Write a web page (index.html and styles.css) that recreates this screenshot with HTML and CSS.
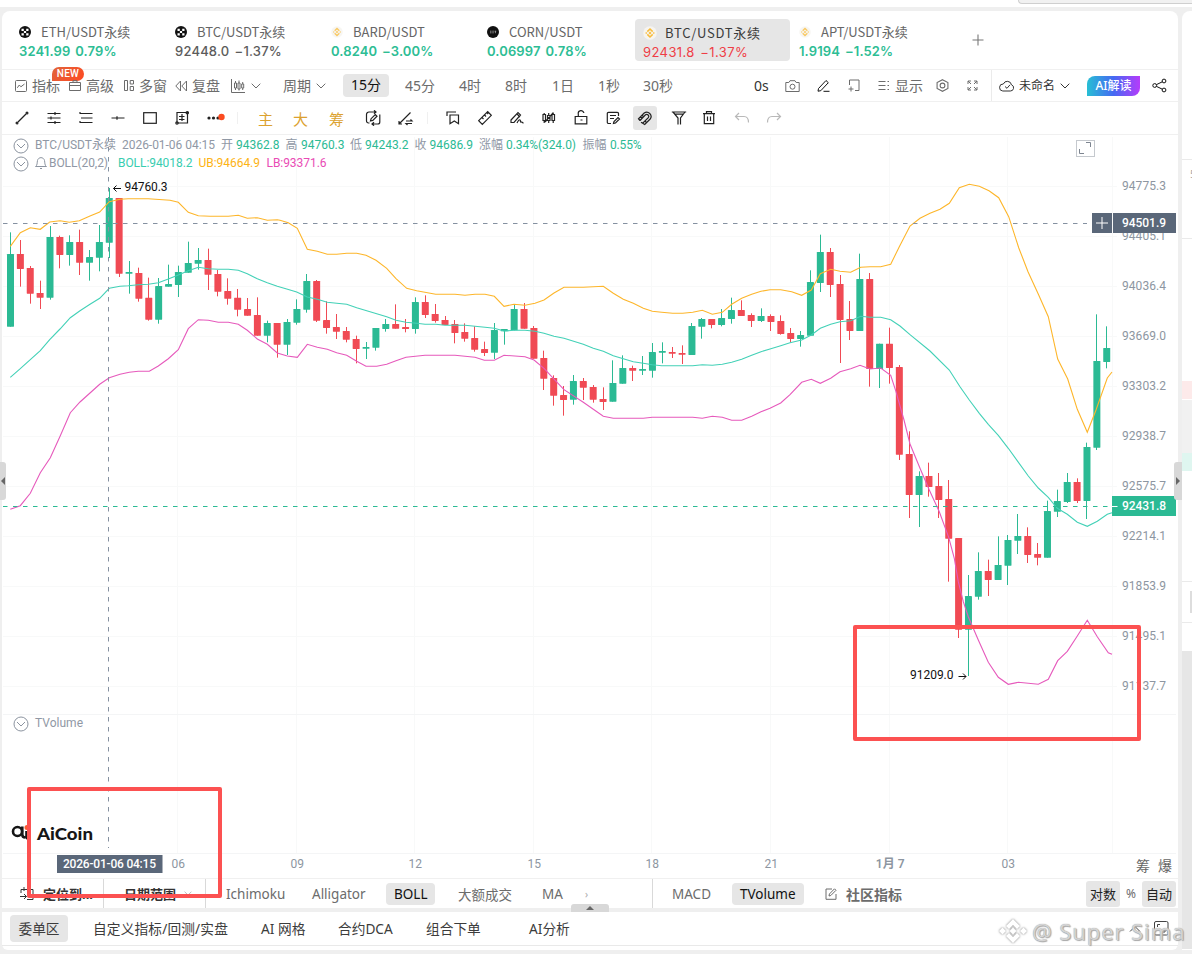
FILE: index.html
```html
<!DOCTYPE html>
<html lang="zh-CN">
<head>
<meta charset="utf-8">
<title>AiCoin</title>
<link rel="stylesheet" href="styles.css">
</head>
<body>
<svg class="defs" width="0" height="0">
  <defs>
    <symbol id="okx" viewBox="0 0 12 12"><circle cx="6" cy="6" r="6" fill="#111"/><path d="M2.5 2.8h2.3v2.2H2.5zM7.2 2.8h2.3v2.2H7.2zM4.9 5h2.2v2.1H4.9zM2.5 7.2h2.3v2.2H2.5zM7.2 7.2h2.3v2.2H7.2z" fill="#fff"/></symbol>
    <symbol id="bnb" viewBox="0 0 14 14"><circle cx="7" cy="7" r="6.8" fill="#f6f4f0"/><path d="M4.3 5.6 7 3l2.7 2.6M4.3 8.4 7 11l2.7-2.6" fill="none" stroke="#f8bc3c" stroke-width="1.6"/><path d="M7 5.5 8.5 7 7 8.5 5.5 7zM2.2 7l1-1 1 1-1 1zM9.8 7l1-1 1 1-1 1z" fill="#f8bc3c"/></symbol>
    <symbol id="chev" viewBox="0 0 10 6"><path d="M.7.7 5 5 9.3.7" fill="none" stroke="currentColor"/></symbol>
  </defs>
</svg>
<div class="topstrip"><span class="toppill"></span></div>
<div class="workspace">
  <main class="panel">
    <nav class="tabs">
      <div class="tab"><svg class="coin"><use href="#okx"/></svg><span class="name">ETH/USDT永续</span><span class="price up">3241.99 0.79%</span></div>
      <div class="tab"><svg class="coin"><use href="#okx"/></svg><span class="name">BTC/USDT永续</span><span class="price flat">92448.0 −1.37%</span></div>
      <div class="tab"><svg class="coin pale"><use href="#bnb"/></svg><span class="name">BARD/USDT</span><span class="price up">0.8240 −3.00%</span></div>
      <div class="tab"><svg class="coin" viewBox="0 0 12 12"><circle cx="6" cy="6" r="6" fill="#111"/><path d="M3 5.2h1.5M3 6.8h1.5M5.3 5.2h1.5M5.3 6.8h1.5M7.6 5.2h1.6M8.4 5.2v2" stroke="#bbb" stroke-width=".7"/></svg><span class="name">CORN/USDT</span><span class="price up">0.06997 0.78%</span></div>
      <div class="tab active"><svg class="coin big"><use href="#bnb"/></svg><span class="name">BTC/USDT永续</span><span class="price down">92431.8 −1.37%</span></div>
      <div class="tab"><svg class="coin pale"><use href="#bnb"/></svg><span class="name">APT/USDT永续</span><span class="price up">1.9194 −1.52%</span></div>
      <svg class="plus" viewBox="0 0 12 12"><path d="M6 .5v11M.5 6h11" stroke="#777" stroke-width="1.1"/></svg>
    </nav>

    <div class="bar periods">
      <span class="cell"><svg width="12" height="12" viewBox="0 0 12 12"><rect x=".5" y=".5" width="11" height="11" rx="1"/><path d="m2.3 7.8 2-2.8 1.6 1.8L9.5 4"/></svg>指标<b class="new">NEW</b></span>
      <span class="cell"><svg width="12" height="12" viewBox="0 0 12 12"><path d="M.5 2.5h11v8H.5zM.5 5.5h11M4 2.500V.7h4v1.800"/></svg>高级</span>
      <span class="cell"><svg width="10" height="11" viewBox="0 0 10 11"><path d="M.5.5h3v10h-3zM6.200.5h3.300v3.500H6.200zM6.200 6.500h3.300v4H6.200z"/></svg>多窗</span>
      <span class="cell"><svg width="12" height="12" viewBox="0 0 12 12"><path d="M5.500 1v10L.8 6zM11.500 1v10L6.800 6z"/></svg>复盘</span>
      <span class="cell"><svg width="15" height="14" viewBox="0 0 15 14"><path d="M.5 0v13.500H14M3.500 4h2v5h-2zM4.500 2v2M4.500 9v2M7 4h2v6H7zM8 1.500V4M8 10v1.500M10.700 5h2v4h-2zM11.700 3v2M11.700 9v2"/></svg><svg class="chev"><use href="#chev"/></svg></span>
      <span class="cell">周期<svg class="chev"><use href="#chev"/></svg></span>
      <span class="cell pill">15分</span>
      <span class="cell">45分</span><span class="cell">4时</span><span class="cell">8时</span><span class="cell">1日</span><span class="cell">1秒</span><span class="cell">30秒</span>
      <span class="cell dark">0s</span>
      <span class="cell"><svg width="15" height="12" viewBox="0 0 15 12"><path d="M.8 2.500h3L5 .7h5l1.200 1.800h3v9H.8z"/><circle cx="7.500" cy="6.700" r="2.500"/></svg></span>
      <span class="cell ink"><svg width="13" height="13" viewBox="0 0 13 13"><path d="m1.500 9.500 7.500-8 2.300 2.200-7.500 8-2.800.5zM6.500 12.300h6"/></svg></span>
      <span class="cell"><svg width="13" height="13" viewBox="0 0 13 13"><path d="M2.500 6V1h9.500v10.500H8M4 7.500v5M1.500 10h5"/></svg></span>
      <span class="cell tight"><svg width="12" height="11" viewBox="0 0 12 11"><path d="M.5 1.500h7M.5 5.500h7M.5 9.500h7M9.500 1.500h1.500M9.500 5.500h1.500M9.500 9.500h1.500"/></svg>显示</span>
      <span class="cell"><svg width="13" height="13" viewBox="0 0 12 12"><path d="M6 .6 11 3.300v5.400l-5 2.700-5-2.700V3.300z"/><circle cx="6" cy="6" r="2.200"/></svg></span>
      <span class="cell"><svg width="11" height="11" viewBox="0 0 11 11"><path d="M1 4V1h3M7 1h3v3M10 7v3H7M4 10H1V7M1 1l3 3M10 1 7 4M10 10 7 7M1 10l3-3"/></svg></span>
      <span class="cell rule"></span>
      <span class="cell dark small cloud"><svg width="15" height="12" viewBox="0 0 15 12"><path d="M3.800 11h7.500a3.200 3.200 0 0 0 1.200-6.200A4.300 4.300 0 0 0 4.300 4 3.500 3.500 0 0 0 3.800 11zM6 6.500 8 8.300l3-3.500"/></svg>未命名<svg class="chev"><use href="#chev"/></svg></span>
      <span class="cell ai">AI解读</span>
      <span class="cell ink"><svg width="15" height="15" viewBox="0 0 15 15"><circle cx="2.700" cy="7.500" r="1.900"/><circle cx="12" cy="3" r="1.900"/><circle cx="12" cy="12" r="1.900"/><path d="m4.500 6.600 5.800-2.800M4.500 8.400l5.800 2.800"/></svg></span>
    </div>

    <div class="bar tools">
      <svg viewBox="0 0 16 16"><path d="M4 12 12 4"/><circle cx="3" cy="13" r=".9"/><circle cx="13" cy="3" r=".9"/></svg>
      <svg viewBox="0 0 16 16"><path d="M1.500 3.500h13M1.500 8h13M1.500 12.500h13M9 2v3M5 6.500v3M9 11v3"/></svg>
      <svg viewBox="0 0 16 16"><path d="M1.500 3.500h13M3 8h11.500M1.500 12.500h13M2 3.500V2M2 12.500V11"/></svg>
      <svg viewBox="0 0 16 16"><path d="M1.500 8h13M7 6.200v3.600"/></svg>
      <svg viewBox="0 0 16 16"><rect x="1.700" y="2.700" width="12.600" height="10.600"/></svg>
      <svg viewBox="0 0 16 16"><path d="M3 2.500h10.500V13H3zM5 6.500h5.500M8 4v7M5 9.500h5.500"/><circle cx="3" cy="13" r="1.200"/><circle cx="13.300" cy="2.700" r="1.200"/></svg>
      <svg viewBox="0 0 18 16" class="wide"><g stroke="none" fill="#222"><circle cx="2" cy="8" r="1.600"/><circle cx="6.500" cy="8" r="1.600"/><circle cx="11" cy="8" r="1.600"/><circle cx="14.500" cy="7" r="3.200" fill="#fb4b20"/></g></svg>
      <i class="dots"></i>
      <span class="gold">主</span><span class="gold">大</span><span class="gold">筹</span>
      <svg viewBox="0 0 16 16"><path d="M4.500 13H3.500A2 2 0 0 1 1.500 11V4.500A2.500 2.500 0 0 1 4 2H11M9 .3 11 2 9 3.700M14.800 4.500V12a2 2 0 0 1-2 2H7M9 12.300 7 14l2 1.700M5.500 11l.6-2.300 4.200-4.200 1.700 1.700-4.200 4.200z"/></svg>
      <svg viewBox="0 0 16 16"><path d="m1.500 13.500 11-11M1 11v3h3M8 11h6l-1.500-1.500M14 13.500H8L9.500 15"/></svg>
      <i class="dots"></i>
      <svg viewBox="0 0 16 16"><path d="M2 6V2h9M5 5h8.500v8.700L9.300 11 5 13.700z"/></svg>
      <svg viewBox="0 0 16 16"><path d="m1.700 10.700 9-9 3.600 3.600-9 9zM5 7.500l1.500 1.500M7.500 5l1.500 1.500M10 2.700l1.200 1.300"/></svg>
      <svg viewBox="0 0 16 16"><path d="m2 10 7-7.500 2.500 2.500-6.500 7.500H2zM8 4l3 3M8 13c3-6 4-2 3.200-.8 1.500-1 2 .3 3.300 1"/></svg>
      <svg viewBox="0 0 16 16"><path d="M2 4.500h2.500v6H2zM3.200 3v2M3.200 10v3M6.500 5.500H9v5H6.500zM7.700 3v2M7.700 10v3M11 4.500h2.500v6H11zM12.200 2.500v2M12.200 10v3M4 12 12 3"/></svg>
      <svg viewBox="0 0 16 16"><path d="M2.200 6.500h11.600v7.300H2.200zM5.300 6.500V4a2.800 2.800 0 0 1 5.600-1M7.500 10h2"/></svg>
      <svg viewBox="0 0 16 16"><path d="M6 13.500H3.500A1.200 1.200 0 0 1 2.300 12.300V3.500a1.200 1.200 0 0 1 1.200-1.200h8.800a1.200 1.200 0 0 1 1.200 1.200V6M5 5.500h6M5 8.500h4M8.500 13.500l.5-2 4-4 1.500 1.500-4 4z"/></svg>
      <span class="on"><svg viewBox="0 0 16 16"><path d="M3 10.500 8.500 4.800a2 2 0 0 1 2.800 2.800L5.700 13.200l-1.700-1M3 10.500l-1.500-1.700L7.200 3a4.300 4.300 0 0 1 6 6L7.700 14.500l-2-1.300M3.500 6.800 5.300 8.600M5 5.200 6.800 7M9.500 12.500 7.700 10.800"/></svg></span>
      <svg viewBox="0 0 16 16"><path d="M.8 2h14.400M2 2l5 6v6.500M14 2 9.500 8v6.500M4 4.200h8"/></svg>
      <svg viewBox="0 0 16 16"><path d="M2 3.700h12M5.500 3.700V1.700h5v2M3.300 3.700v10h9.400v-10M6.500 6.500v4.500M9.500 6.500v4.500"/></svg>
      <svg viewBox="0 0 16 16" class="off"><path d="M5 3 1.500 6.500 5 10M1.500 6.500H10c3 0 4.500 2 4.500 6"/></svg>
      <svg viewBox="0 0 16 16" class="off"><path d="m11 3 3.500 3.500L11 10M14.500 6.500H6c-3 0-4.500 2-4.500 6"/></svg>
    </div>

    <svg class="chart" id="chart" viewBox="2 135 1176 743" width="1176" height="744">
      <g id="grid"></g>
      <g id="candles"></g>
      <g id="bands"></g>
      <path class="cross" d="M108.500 137V848" stroke-dasharray="4.500 5.500"/>
      <path class="cross" d="M3 223.500H1087" stroke-dasharray="4.500 5.500"/>
      <path d="M3 506.500H1112" stroke="#2bba94" stroke-dasharray="4.500 5.500"/>
      <g class="t slate">
        <g class="drop"><circle cx="21" cy="146" r="7"/><path d="m17 144 4 4 4-4"/><circle cx="21" cy="164" r="7"/><path d="m17 162 4 4 4-4"/><circle cx="21" cy="724" r="7"/><path d="m17 722 4 4 4-4"/><path d="M35.500 166.500c2-1 1.500-4 2-6 .8-3.800 6.200-3.800 7 0 .5 2 0 5 2 6zM40 168.500h2"/></g>
        <text x="35" y="149" textLength="81">BTC/USDT永续</text><text x="122" y="149" textLength="93">2026-01-06 04:15</text>
        <text x="221" y="149">开</text><text x="285.500" y="149">高</text><text x="350" y="149">低</text><text x="414.500" y="149">收</text><text x="479" y="149">涨幅</text><text x="582.500" y="149">振幅</text>
        <text x="49" y="167" textLength="59">BOLL(20,2)</text><text x="35" y="727" textLength="48">TVolume</text>
      </g>
      <g class="t green">
        <text x="236" y="149" textLength="43.500">94362.8</text><text x="301" y="149" textLength="43.500">94760.3</text><text x="365" y="149" textLength="43.500">94243.2</text><text x="429.500" y="149" textLength="43.500">94686.9</text><text x="506" y="149" textLength="70">0.34%(324.0)</text><text x="610" y="149" textLength="31.500">0.55%</text>
      </g>
      <g class="t"><text x="118" y="167" textLength="74.500" fill="#38cdb0">BOLL:94018.2</text><text x="198.500" y="167" textLength="61.500" fill="#fdb314">UB:94664.9</text><text x="266.500" y="167" textLength="60" fill="#e94bb5">LB:93371.6</text></g>
      <g class="t ink-text"><text x="124.500" y="191" textLength="43">94760.3</text><text x="910" y="679" textLength="43.500">91209.0</text><path d="M121 188.500H113.500M116.500 185.500l-3 3 3 3M958.500 676.500H966M963 673.500l3 3-3 3"/></g>
      <g class="t axis" id="prices"></g>
      <g class="t axis mid" id="times"></g>
      <g class="tag">
        <rect x="1092" y="213" width="20" height="20"/><rect x="1113" y="213" width="63" height="20"/><path d="M1102 217v12M1096 223h12"/>
        <text x="1122" y="227" textLength="44">94501.9</text>
        <rect x="57" y="855" width="105.500" height="18"/><text x="63" y="868" textLength="93">2026-01-06 04:15</text>
        <rect x="1112" y="496" width="64" height="20" fill="#2bba94"/><path d="M1112 506.500h5.500"/><text x="1122" y="510" textLength="44">92431.8</text>
      </g>
      <g fill="none"><rect x="1076.500" y="140.500" width="18" height="16" stroke="#c5c9ce"/><path d="M1086 142.500h4.500v4.500M1079.500 149v4.500h4.500" stroke="#7d8590"/></g>
      <g fill="none" stroke="#161616" stroke-width="2.600"><circle cx="17.500" cy="831.500" r="4.500"/><path d="M22.300 826.500v8q0 3 3 3M26.500 831v5.500q0 2.500 3 2.500"/><circle cx="27" cy="827.500" r="1.200" stroke="#fb5a30"/></g>
      <text class="brand" x="37" y="840" textLength="56" lengthAdjust="spacingAndGlyphs">AiCoin</text>
      <g class="corner"><text x="1136" y="871">筹</text><text x="1158" y="871">爆</text></g>
    </svg>

    <div class="bar indicators">
      <span class="cell dark bold"><svg width="16" height="15" viewBox="0 0 16 15"><path d="M2 7V3.500h12v10H8M5 1v4M11 1v4M1 10.500h6.500M5 8l2.500 2.500L5 13"/></svg>定位到...</span>
      <span class="cell rule strong"></span>
      <span class="cell dark bold tight">日期范围<svg class="mini" viewBox="0 0 10 6"><use href="#chev"/></svg></span>
      <span class="cell rule strong"></span>
      <span class="cell">Ichimoku</span><span class="cell">Alligator</span><span class="cell chip">BOLL</span><span class="cell">大额成交</span><span class="cell">MA</span><span class="cell tiny">›</span>
      <span class="cell rule strong"></span>
      <span class="cell">MACD</span><span class="cell chip">TVolume</span>
      <span class="cell bold community"><svg width="12" height="12" viewBox="0 0 12 12"><path d="M7 1H1v10.300h10V6M4 8l.4-2L9.500.8 11 2.300 5.800 7.500z"/></svg>社区指标</span>
      <span class="cell toggle">对数</span><span class="cell small">%</span><span class="cell toggle">自动</span>
    </div>
  </main>
  <aside class="side"><i class="s1"></i><i class="s2">5</i><i class="s3"></i><i class="s4"></i><i class="s5"></i><i class="s6"></i><i class="s7"></i><i class="s8"></i></aside>
  <footer class="dock">
    <div class="links"><span class="sel">委单区</span><span class="long">自定义指标/回测/实盘</span><span>AI 网格</span><span>合约DCA</span><span>组合下单</span><span>AI分析</span>
    <span class="dockicons"><svg width="14" height="8" viewBox="0 0 14 8"><path d="m2 6.500 5-5 5 5"/></svg><svg width="15" height="15" viewBox="0 0 15 15"><rect x=".5" y=".5" width="13.500" height="13.500" rx="1.500"/><path d="M3.500 6V3.500H6M11 8.500V11H8.500"/></svg></span></div>
  </footer>
</div>
<i class="handle left"></i><i class="handle right"></i><i class="handle bottom"></i>
<div class="mark first"></div><div class="mark second"></div>
<div class="watermark"><svg width="30" height="30" viewBox="0 0 30 30"><path d="m8 10 7-7 7 7-3 3-4-4-4 4zM8 20l7 7 7-7-3-3-4 4-4-4zM1 15l3.500-3.500L8 15l-3.500 3.500zM22 15l3.500-3.500L29 15l-3.500 3.500zM11.500 15l3.500-3.500 3.500 3.500-3.500 3.500z"/></svg><span>@ Super Sima</span></div>
<script src="chart.js"></script>
</body>
</html>
```
FILE: styles.css
```css
* { box-sizing: border-box; }
body { margin: 0; width: 1192px; height: 957px; overflow: hidden; position: relative; background: #fff; color: #6c6c6c; font-family: "Noto Sans", "Noto Sans CJK SC", sans-serif; font-size: 14px; }
i { font-style: normal; }
.defs { position: absolute; }
.topstrip { height: 7px; display: flex; justify-content: flex-end; }
.toppill { width: 174px; height: 4px; background: #f1f1f1; border: 1px solid #cfcfcf; border-width: 0 0 1px 1px; border-radius: 0 0 0 4px; }
.workspace { height: 947px; background: #efefef; padding: 4px 0 4px 2px; display: grid; grid-template-columns: 1176px 10px; grid-template-rows: 897px 38px; gap: 4px; align-content: start; }
.panel { background: #fff; border-radius: 8px 8px 0 0; display: flex; flex-direction: column; overflow: hidden; }
.tabs { height: 58px; display: flex; padding: 8px 0 0 9px; }
.tab { width: 155px; height: 42px; margin-right: 1px; padding: 3px 0 0 8px; display: grid; grid-template-columns: 22px 1fr; grid-template-rows: 19px 19px; align-items: center; border-radius: 4px; white-space: nowrap; }
.coin { width: 12px; height: 12px; }
.coin.big { width: 14px; height: 14px; }
.pale { opacity: .8; }
.name { font: 13px "Noto Sans CJK SC"; line-height: 18px; color: #666; }
.price { grid-column: 1 / 3; font: 600 13px/18px Inter, sans-serif; letter-spacing: .12px; word-spacing: 1.500px; }
.up { color: #2dbd94; } .flat { color: #5c5c5c; font-weight: 500; letter-spacing: .2px; } .down { color: #ef3d46; }
.tab.active { background: #e6e6e6; padding-top: 4px; }
.tab.active .name { color: #3b3b3b; letter-spacing: .75px; }
.tab.active .price { font-weight: 400; letter-spacing: .4px; }
.plus { width: 12px; height: 12px; margin: 15px 0 0 25px; }
.bar { display: grid; align-items: center; border-top: 1px solid #f0f0f0; flex: none; }
.bar svg { fill: none; stroke: currentColor; stroke-width: 1; flex: none; }
.cell { display: flex; align-items: center; gap: 5px; white-space: nowrap; position: relative; justify-self: start; }
.periods { height: 32px; padding-left: 13px; grid-template-columns: 54px 55px 51px 56px 52px 60px 62px 54px 46px 47px 46px 45px 111px 31px 32px 30px 31px 58px 31px 24px 8px 88px 65px 20px; grid-template-rows: 31px; line-height: 18px; }
.cell .chev { width: 10px; height: 6px; }
.periods .pill { width: 46px; height: 23px; padding-bottom: 1px; background: #e6e6e6; border-radius: 4px; color: #111; justify-content: center; }
.dark { color: #333; } .ink { color: #111; } .small { font-size: 12px; } .bold { font-weight: 700; }
.rule { width: 1px; height: 31px; background: #ebebeb; }
.new { position: absolute; left: 37px; top: -10px; width: 32px; height: 14px; border-radius: 7px 7px 7px 0; background: linear-gradient(135deg, #e0653c, #ff4921); color: #fff; font: 500 10px/14px Roboto; text-align: center; letter-spacing: .3px; }
.ai { width: 53px; height: 20px; justify-content: center; border-radius: 8px 0 8px 0; background: linear-gradient(90deg, #27bfd4, #4569f2 50%, #b63bfb); color: #fff; font-size: 12px; font-weight: 500; }
.tools { height: 33px; padding-left: 12px; grid-template-columns: 32px 32px 32px 32px 32px 33px 30px 21px 35px 36px 36px 33px 29px 18px 32px 32px 32px 32px 32px 28px 38px 30px 33px 32px 16px; color: #222; }
.tools svg { width: 16px; height: 16px; stroke-width: 1.200; }
.tools svg.wide { width: 18px; }
.tools .off { color: #b9b9b9; }
.dots { width: 1px; height: 12px; background: #f0f0f0; }
.gold { color: #dca22f; font-size: 15px; line-height: 16px; padding-top: 2px; }
.on { width: 24px; height: 24px; border-radius: 3px; background: #e6e6e6; display: flex; align-items: center; justify-content: center; }
.chart { display: block; flex: none; border-top: 1px solid #f0f0f0; }
.chart .t { font: 12px Roboto, "Noto Sans CJK SC", sans-serif; }
.chart .slate { fill: #9098a5; }
.drop { fill: none; stroke: #8c94a0; }
.chart .green { fill: #2bba94; }
.ink-text { fill: #111; }
.ink-text path { fill: none; stroke: #111; }
.chart .axis { fill: #8d96a1; }
.chart .mid { text-anchor: middle; }
.cross { stroke: #8591a1; }
.tag { fill: #5a6779; font: 500 12px Roboto; }
.tag text { fill: #fff; }
.tag path { stroke: #fff; }
.brand { font: 900 17px Lato, sans-serif; fill: #161616; }
.corner { font: 14px "Noto Sans CJK SC"; fill: #666; }
.indicators { height: 30px; padding-left: 17px; grid-template-columns: 84px 21px 81px 21px 86px 74px 72px 84px 43px 67px 20px 60px 93px 261px 40px 16px 34px; grid-template-rows: 29px; font-size: 13.500px; }
.indicators .bold { font-size: 13px; gap: 8px; }
.indicators .community { font-size: 14px; gap: 9px; }
.indicators .rule { height: 29px; }
.indicators .mini { width: 8px; height: 5px; color: #aaa; }
.strong { background: #d9d9d9; }
.chip { height: 22px; padding: 0 8px; background: #e6e6e6; border-radius: 4px; color: #111; }
.toggle { width: 34px; height: 26px; border-radius: 3px; background: #e6e6e6; justify-content: center; color: #222; font-size: 13px; }
.tiny { color: #aaa; font-size: 10px; }
.dock { background: #fff; border-radius: 0 0 6px 6px; grid-row: 2; grid-column: 1; }
.links { height: 34px; border-bottom: 1px solid #e9e9e9; display: grid; grid-template-columns: 83px 168px 77px 88px 103px 599px auto; padding-left: 8px; align-items: center; color: #3c3c3c; font-size: 13.700px; line-height: 20px; white-space: nowrap; }
.links .long { letter-spacing: .15px; }
.sel { justify-self: start; width: 58px; height: 27px; line-height: 27px; background: #e6e6e6; border-radius: 4px; text-align: center; }
.dockicons { display: flex; align-items: center; gap: 12px; }
.dockicons svg { fill: none; stroke: #444; }
.side { background: #fff; grid-column: 2; grid-row: 1 / 3; border-radius: 8px 0 0 0; display: flex; flex-direction: column; overflow: hidden; }
.side i { flex: none; }
.s1 { height: 149px; border-bottom: 1px solid #eaeaea; }
.s2 { height: 79px; border-bottom: 1px solid #eaeaea; padding: 6px 0 0 8px; font-size: 11px; color: #aaa; }
.s3 { height: 142px; }
.s4 { height: 18px; background: #fdeaea; }
.s5 { height: 53px; margin-top: 1px; background: #f1f1f1; }
.s6 { height: 18px; background: #dff6f0; }
.s7 { height: 180px; background: linear-gradient(#eaeaea, #eaeaea) 0 110px / 100% 1px no-repeat, linear-gradient(#ddd, #ddd) 8px 120px / 2px 22px no-repeat, linear-gradient(#eaeaea, #eaeaea) 0 151px / 100% 1px no-repeat; }
.s8 { height: 298px; background: #e6e6e6; }
.handle { position: absolute; background: #d8d8d8; display: flex; align-items: center; justify-content: center; }
.handle::after { content: ""; border: 4px solid transparent; }
.handle.left { left: 0; top: 462px; width: 6px; height: 38px; border-radius: 0 3px 3px 0; }
.handle.left::after { border-right-color: #666; border-left: 0; }
.handle.right { left: 1174px; top: 462px; width: 8px; height: 38px; border-radius: 3px 0 0 3px; }
.handle.right::after { border-left-color: #666; border-right: 0; }
.handle.bottom { left: 571px; top: 904px; width: 38px; height: 8px; border-radius: 3px 3px 0 0; }
.handle.bottom::after { border-bottom-color: #666; border-top: 0; }
.mark { position: absolute; border: 4px solid #fc5151; border-radius: 2px; }
.mark.first { left: 27px; top: 787px; width: 195px; height: 111px; }
.mark.second { left: 853px; top: 625px; width: 288px; height: 116px; }
.watermark { position: absolute; left: 998px; top: 916px; display: flex; align-items: center; gap: 4px; color: rgba(225,225,225,.85); font: 22px/30px "Noto Sans"; letter-spacing: .9px; white-space: nowrap; text-shadow: 0 0 1px #888, 1px 1px 1px #aaa; }
.watermark svg { fill: #fff; filter: drop-shadow(0 0 1px #777); }
```
FILE: chart.js
```js
const NS = "http://www.w3.org/2000/svg";
const GREEN = "#2bba94", RED = "#f04a54";
function add(parent, tag, attrs, text) {
  const el = document.createElementNS(NS, tag);
  for (const key in attrs) el.setAttribute(key, attrs[key]);
  if (text !== undefined) el.textContent = text;
  document.getElementById(parent).appendChild(el);
}

// Grid and axis labels
const timeX = [177.5, 296.5, 414.5, 533.5, 651.5, 770.5, 889.5, 1007.5, 1112.5];
timeX.forEach(x => add("grid", "path", { d: `M${x} 137V853`, stroke: "#f8f9f9" }));
const prices = ["94775.3", "94405.1", "94036.4", "93669.0", "93303.2", "92938.7", "92575.7", "92214.1", "91853.9", "91495.1", "91137.7"];
prices.forEach((p, i) => {
  add("grid", "path", { d: `M3 ${186.5 + i * 50}H1117`, stroke: "#f8f9f9" });
  add("prices", "text", { x: 1122, y: 190 + i * 50, textLength: 44 }, p);
});
["M3 714.5H1176", "M3 853.5H1176"].forEach(d => add("grid", "path", { d, stroke: "#f4f5f6" }));
["06", "09", "12", "15", "18", "21", "1月 7", "03"].forEach((t, i) => {
  add("times", "text", { x: timeX[i] + 0.7, y: 868, "font-weight": i === 6 ? 600 : 400 }, t);
});

// Candles: direction, body top, body bottom, high, low, in thirds of a pixel below the group's base
const groups = [
  [180, "G 222 440 157 440|R 222 267 180 320|R 264 341 258 371|R 339 353 302 387|G 171 353 138 359|R 171 225 167 265|G 186 225 166 257|R 186 248 149 285|G 231 248 210 302|G 186 233 135 274|G 54 188 24 234|R 54 281 54 291|G 276 281 243 341|R 279 356 263 365|R 353 419 293 422|G 318 419 294 431|G 312 320 254 320|G 276 315 257 351|G 249 278 185 278|G 240 251 204 269|R 240 284 206 330|R 282 335 270 349|R 333 356 295 374|R 353 389 327 409|R 387 407 354 407|R 405 467 352 467|G 429 467 422 487|R 429 494 429 533"],
  [200, "G 366 434 357 465|G 327 368 298 374|G 243 329 222 338|R 243 362 240 366|R 360 384 304 401|R 381 395 342 417|R 393 419 381 427|R 417 447 407 490|G 441 446 426 477|G 384 443 384 452|G 372 387 357 395|R 372 386 313 386|R 381 387 357 397|G 306 387 292 401|R 306 345 286 354|R 342 363 312 368|R 360 375 348 375|R 372 399 360 430|R 396 416 370 425|R 414 449 379 455|R 447 459 425 468|G 390 458 369 477|G 387 394 387 434|G 327 391 315 391|R 327 386 309 386|R 384 476 378 476|R 474 536 452 570|R 534 587 526 617|R 585 600 558 647"],
  [240, "G 423 479 405 494|R 423 443 414 480|R 441 479 435 488|R 477 486 442 510|G 429 485 361 485|G 384 431 346 431|R 384 392 377 423|G 387 392 348 405|G 336 392 309 413|G 333 338 307 370|R 336 341 321 354|R 339 344 316 372|G 258 345 249 345|G 237 260 234 296|R 237 255 237 265|G 234 255 207 259|G 210 237 173 251|R 210 228 181 228|R 225 243 220 261|G 228 243 205 246|R 228 246 223 273|R 243 282 226 284|R 279 297 264 307|G 285 297 273 320|G 126 287 91 287"],
  [170, "G 246 339 194 366|R 246 345 234 381|R 342 450 315 579|R 447 483 393 510|G 327 483 251 483|R 327 597 309 650|G 521 597 521 654|R 521 594 473 641|R 591 854 585 870"],
  [400, "R 162 285 94 354|G 228 285 214 381|R 228 261 188 290|R 258 300 219 354|R 297 416 240 545|R 414 689 414 714|G 588 689 525 828|G 513 590 457 599|R 513 540 479 588|G 495 540 409 540|G 420 497 405 555|G 408 422 342 462|R 408 465 382 489|R 462 473 429 496|G 333 473 302 473|G 303 335 269 351|G 246 306 219 309|R 246 303 235 309|G 141 303 128 357|G -117 143 -257 150|G -156 -114 -221 -95"]
];
let index = 0;
for (const [base, rows] of groups) {
  for (const row of rows.split("|")) {
    const [dir, ...v] = row.split(" ");
    const [top, bottom, high, low] = v.map(n => base + n / 3);
    const x = 10.5 + index * 9.876;
    const color = dir === "G" ? GREEN : RED;
    add("candles", "path", { d: `M${Math.floor(x) + 0.5} ${high}V${low}`, stroke: color });
    add("candles", "rect", { x: x - 3.5, y: top, width: 7, height: Math.max(1.5, bottom - top), rx: 0.4, fill: color });
    index++;
  }
}

// Bollinger bands: segments of [origin x, origin y, points in thirds of a pixel]
const bands = {
  "#fdb62b": [
    [0, 180, "31,199 61,158 91,143 121,148 149,126 180,122 208,127 238,122 270,108 299,96 328,65 360,58 385,56 445,56 510,61 535,67 565,97 595,107 630,109 685,109 715,106 742,115 772,113 802,121 832,119"],
    [280, 200, "0,61 25,68 52,85 82,148 112,154 142,163 170,163 200,160 230,160 258,166 288,181 320,205 348,236 380,265 410,272 467,283 525,283 555,286 585,283 615,283 643,289 672,319 702,313 735,316 765,310"],
    [540, 240, "12,180 42,159 72,142 130,142 160,140 190,139 220,160 250,178 280,190 310,205 337,214 365,217 398,220 428,220 458,217 487,211 517,223 547,217 575,193 605,175 635,163 663,154 690,149 722,149 755,155"],
    [790, 170, "35,376 64,360 91,311 122,298 150,304 182,307 212,292 240,290 272,290 302,283 328,230 360,168 390,145 420,130 450,118 478,100 508,53 538,43 568,49 597,62 626,83 656,140 686,233 714,305 746,375 775,440 803,567 833,627 862,718 892,787 918,720 952,624 966,606"]
  ],
  "#43d1b7": [
    [0, 180, "31,592 61,566 121,512 149,479 180,447 211,413 240,392 270,373 299,355 328,325 360,319 385,317 415,314 445,313 475,308 505,297 535,285 565,272 595,262 625,266 655,268 685,268 715,271 742,281 772,296 802,308 832,319"],
    [280, 200, "20,267 50,276 82,291 112,298 142,307 170,310 200,313 230,323 260,332 290,341 320,350 348,361 378,367 410,370 435,373 467,373 495,376 555,376 585,379 615,382 643,385 672,393 702,391 735,391 765,394"],
    [540, 240, "12,280 42,289 72,295 130,313 160,325 190,334 220,347 250,356 280,365 310,370 337,374 365,377 458,377 487,374 517,376 547,373 575,367 605,358 635,346 663,335 690,327 722,317"],
    [790, 170, "0,518 35,510 64,495 91,475 122,463 150,455 182,452 212,439 240,442 272,442 302,449 330,468 360,494 420,543 478,600 510,650"],
    [830, 400, "418,0 448,40 475,73 505,106 535,145 595,228 625,264 655,292 682,325 712,343 742,367 772,379 802,364 832,343 846,338"]
  ],
  "#e65abc": [
    [0, 400, "31,328 61,317 91,280 121,218 151,173 181,107 211,38"],
    [0, 180, "240,666 270,639 299,613 328,593 360,583 388,577 415,574 448,574 475,558 505,536 535,509 565,446 595,419 625,421 655,427 685,427 715,433 742,451 772,477 802,493 832,519 862,528"],
    [280, 200, "52,472 82,433 112,442 142,448 170,458 200,466 230,484 258,499 290,499 320,493 348,482 378,472 435,466 525,466 585,472 613,481 643,481 672,466 735,470 762,480 793,506"],
    [540, 240, "40,415 72,449 130,487 160,508 190,529 220,535 310,535 337,532 458,532 487,535 517,529 547,532 575,541 605,541 635,529 663,515 690,505 722,489"],
    [790, 170, "0,674 35,637 64,628 91,640 122,625 150,605 182,596 210,586 240,597 272,594 302,616 318,665"],
    [830, 400, "205,0 222,60 240,132 270,205 298,270 328,335 356,412 373,475 385,545 400,605 415,650 445,720 475,787 505,832 535,853 565,847 625,853 655,838 683,782 712,754 742,708 772,661 802,710 835,758 846,763"]
  ]
};
for (const stroke in bands) {
  const points = bands[stroke].flatMap(([ox, oy, list]) => list.split(" ").map(p => {
    const [x, y] = p.split(",");
    return `${(ox + x / 3).toFixed(1)},${(oy + y / 3).toFixed(1)}`;
  }));
  add("bands", "polyline", { points: points.join(" "), fill: "none", stroke, "stroke-width": 1.1 });
}
```
